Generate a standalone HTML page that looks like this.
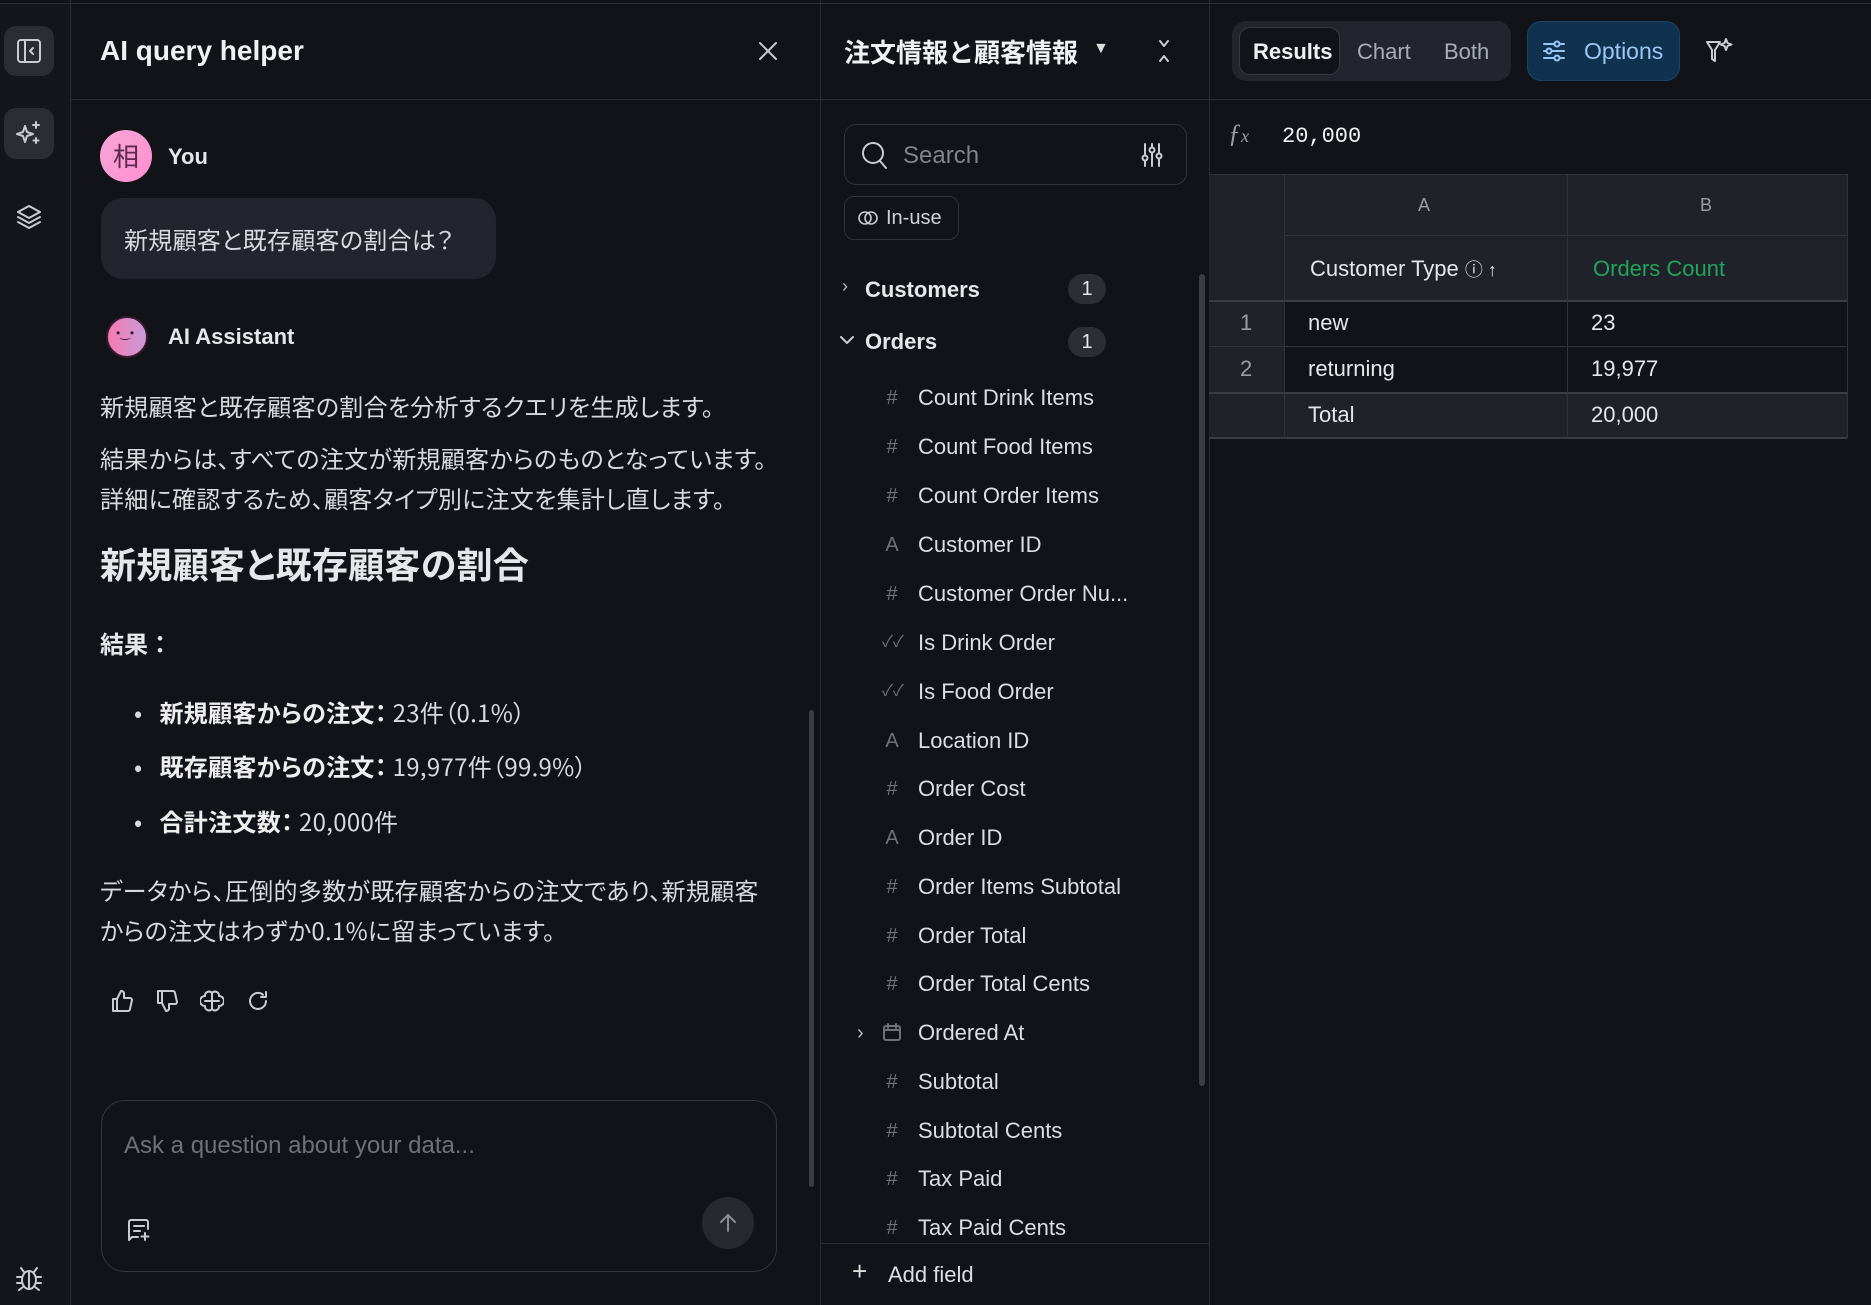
<!DOCTYPE html>
<html><head><meta charset="utf-8"><style>
*{box-sizing:border-box;margin:0;padding:0}
body{width:1871px;height:1305px;background:#111318;color:#e6e7ea;font-family:"Liberation Sans","Noto Sans CJK JP",sans-serif;position:relative;overflow:hidden}
.a{position:absolute}
.jp{font-family:"Noto Sans CJK JP","Liberation Sans",sans-serif}
.p{font-feature-settings:"palt";letter-spacing:0.3px}
.vl{position:absolute;top:0;bottom:0;width:1px;background:#2a2d34}
.hl{position:absolute;height:1px;background:#2a2d34}
.fi{position:absolute;left:918px;font-size:22px;color:#dcdee3;line-height:30px}
.ic{position:absolute;left:882px;width:20px;text-align:center;color:#6e727b;font-size:20px;line-height:30px}
svg{position:absolute;fill:none;stroke:#c9ccd2;stroke-width:2;stroke-linecap:round;stroke-linejoin:round}
.cell{position:absolute;font-size:22px;line-height:30px}
</style></head><body>
<div class="hl" style="left:0;right:0;top:3px;background:#2c2f36"></div>
<!-- sidebar -->
<div class="a" style="left:0;top:4px;width:70px;bottom:0;background:#14161b"></div>
<div class="vl" style="left:70px"></div>
<div class="a" style="left:4px;top:26px;width:50px;height:50px;border-radius:12px;background:#2a2d33"></div>
<svg style="left:16px;top:38px" width="26" height="26" viewBox="0 0 26 26"><rect x="2" y="2" width="22" height="22" rx="3"/><path d="M9 2v22M17 10l-3 3 3 3"/></svg>
<div class="a" style="left:4px;top:108px;width:50px;height:51px;border-radius:12px;background:#2a2d33"></div>
<svg style="left:13px;top:118px" width="32" height="32" viewBox="0 0 32 32"><path d="M12 8l2 6 6 2-6 2-2 6-2-6-6-2 6-2z"/><path d="M23 4v6M20 7h6M23 20v5M20.5 22.5h5"/></svg>
<svg style="left:14px;top:202px" width="30" height="30" viewBox="0 0 30 30"><path d="M15 4l11 6-11 6-11-6z"/><path d="M4 15l11 6 11-6M4 20l11 6 11-6"/></svg>
<svg style="left:14px;top:1263px" width="30" height="30" viewBox="0 0 30 30"><ellipse cx="15" cy="17" rx="7" ry="9"/><path d="M15 9v17M8 14H3M8 20H3M22 14h5M22 20h5M10 9l-3-4M20 9l3-4M9 24l-4 3M21 24l4 3"/></svg>

<!-- AI panel -->
<div class="a" style="left:100px;top:35px;font-size:28px;font-weight:bold;color:#f0f1f3">AI query helper</div>
<svg style="left:757px;top:40px" width="22" height="22" viewBox="0 0 22 22"><path d="M3 3l16 16M19 3L3 19"/></svg>
<div class="hl" style="left:70px;width:750px;top:99px"></div>
<div class="vl" style="left:820px"></div>
<div class="a" style="left:809px;top:710px;width:5px;height:477px;background:#3a3d44;border-radius:3px"></div>
<div class="a jp" style="left:100px;top:130px;width:52px;height:52px;border-radius:50%;background:linear-gradient(135deg,#f7a6d8,#ff8fd0);color:#5b2a4c;font-size:26px;text-align:center;line-height:52px">相</div>
<div class="a" style="left:168px;top:144px;font-size:22px;font-weight:bold">You</div>
<div class="a jp p" style="left:101px;top:198px;width:395px;height:81px;border-radius:22px;background:#22252d;font-size:24px;line-height:81px;padding-left:23px;color:#d8dade">新規顧客と既存顧客の割合は？</div>
<div class="a" style="left:106px;top:316px;width:42px;height:42px;border-radius:50%;background:linear-gradient(90deg,#f77ab0,#c89bd8);border:2px solid #3a1a30"></div>
<div class="a" style="left:116px;top:326px;font-size:12px;color:#3a1a30">•‿•</div>
<div class="a" style="left:168px;top:324px;font-size:22px;font-weight:bold">AI Assistant</div>
<div class="a jp p" style="left:100px;top:386px;font-size:24px;line-height:40px;color:#d8dade">新規顧客と既存顧客の割合を分析するクエリを生成します。</div>
<div class="a jp p" style="left:100px;top:438px;font-size:24px;line-height:40px;color:#d8dade">結果からは、すべての注文が新規顧客からのものとなっています。<br>詳細に確認するため、顧客タイプ別に注文を集計し直します。</div>
<div class="a jp p" style="left:100px;top:538px;font-size:36px;font-weight:bold;line-height:50px;color:#e6e7ea">新規顧客と既存顧客の割合</div>
<div class="a jp" style="left:100px;top:626px;font-size:24px;font-weight:bold;line-height:34px">結果：</div>
<div class="a jp p" style="left:134px;top:695px;font-size:24px;line-height:34px;color:#d8dade">•&nbsp;&nbsp;&nbsp;<b style="color:#eee">新規顧客からの注文：</b> 23件（0.1%）</div>
<div class="a jp p" style="left:134px;top:749px;font-size:24px;line-height:34px;color:#d8dade">•&nbsp;&nbsp;&nbsp;<b style="color:#eee">既存顧客からの注文：</b> 19,977件（99.9%）</div>
<div class="a jp p" style="left:134px;top:804px;font-size:24px;line-height:34px;color:#d8dade">•&nbsp;&nbsp;&nbsp;<b style="color:#eee">合計注文数：</b> 20,000件</div>
<div class="a jp p" style="left:100px;top:870px;font-size:24px;line-height:40px;color:#d8dade">データから、圧倒的多数が既存顧客からの注文であり、新規顧客<br>からの注文はわずか0.1%に留まっています。</div>
<svg style="left:110px;top:989px" width="24" height="24" viewBox="0 0 24 24"><path d="M7 10v12H3V10zM7 10l4-8c2 0 3 1 3 3v4h6c1 0 2 1 2 2l-2 9c0 1-1 2-2 2H7"/></svg>
<svg style="left:155px;top:989px" width="24" height="24" viewBox="0 0 24 24"><path d="M7 14V2H3v12zM7 14l4 8c2 0 3-1 3-3v-4h6c1 0 2-1 2-2l-2-9c0-1-1-2-2-2H7"/></svg>
<svg style="left:200px;top:989px" width="24" height="24" viewBox="0 0 24 24"><path d="M12 4a4 4 0 0 0-7 3 4 4 0 0 0 0 10 4 4 0 0 0 7 3 4 4 0 0 0 7-3 4 4 0 0 0 0-10 4 4 0 0 0-7-3zM12 4v16M5 12h14"/></svg>
<svg style="left:246px;top:989px" width="24" height="24" viewBox="0 0 24 24"><path d="M20 12a8 8 0 1 1-3-6.3M20 3v5h-5"/></svg>
<div class="a" style="left:101px;top:1100px;width:676px;height:172px;border:1px solid #33363d;border-radius:24px"></div>
<div class="a" style="left:124px;top:1132px;font-size:24px;color:#6d717a">Ask a question about your data...</div>
<svg style="left:126px;top:1217px" width="26" height="26" viewBox="0 0 26 26"><path d="M12 20H6l-3 3V5a2 2 0 0 1 2-2h15a2 2 0 0 1 2 2v7M8 9h10M8 14h6M19 16v7M15.5 19.5h7"/></svg>
<div class="a" style="left:702px;top:1197px;width:52px;height:52px;border-radius:50%;background:#262930"></div>
<svg style="left:716px;top:1211px" width="24" height="24" viewBox="0 0 24 24"><path d="M12 20V4M5 11l7-7 7 7" stroke="#8a8e96"/></svg>

<!-- middle panel -->
<div class="a jp" style="left:844px;top:33px;font-size:26px;font-weight:bold;color:#f0f1f3">注文情報と顧客情報</div>
<div class="a" style="left:1093px;top:40px;font-size:16px;color:#ddd">▼</div>
<svg style="left:1156px;top:38px" width="16" height="26" viewBox="0 0 16 26"><path d="M4 3l4 5 4-5M4 23l4-5 4 5"/></svg>
<div class="hl" style="left:820px;width:389px;top:99px"></div>
<div class="vl" style="left:1209px"></div>
<div class="a" style="left:844px;top:124px;width:343px;height:61px;border:1px solid #2f323a;border-radius:12px"></div>
<svg style="left:860px;top:140px" width="28" height="30" viewBox="0 0 28 30"><circle cx="13" cy="13" r="10"/><path d="M20 21l6 7"/></svg>
<div class="a" style="left:903px;top:142px;font-size:24px;color:#80848c">Search</div>
<svg style="left:1140px;top:142px" width="24" height="26" viewBox="0 0 24 26"><path d="M5 2v22M12 2v22M19 2v22"/><circle cx="5" cy="16" r="2.5" fill="#111318"/><circle cx="12" cy="8" r="2.5" fill="#111318"/><circle cx="19" cy="14" r="2.5" fill="#111318"/></svg>
<div class="a" style="left:844px;top:196px;width:115px;height:44px;border:1px solid #2f323a;border-radius:10px"></div>
<svg style="left:857px;top:209px" width="24" height="18" viewBox="0 0 24 18" ><circle cx="8" cy="9" r="6" stroke-width="1.6"/><circle cx="14" cy="9" r="6" stroke-width="1.6"/></svg>
<div class="a" style="left:886px;top:207px;font-size:20px;color:#d0d2d6">In-use</div>
<div class="a" style="left:842px;top:276px;font-size:18px;color:#bbb">›</div>
<div class="a" style="left:865px;top:277px;font-size:22px;font-weight:bold">Customers</div>
<div class="a" style="left:1068px;top:274px;width:38px;height:30px;border-radius:15px;background:#2b2e35;text-align:center;line-height:30px;font-size:20px">1</div>
<svg style="left:838px;top:333px" width="18" height="14" viewBox="0 0 18 14"><path d="M3 4l6 6 6-6"/></svg>
<div class="a" style="left:865px;top:329px;font-size:22px;font-weight:bold">Orders</div>
<div class="a" style="left:1068px;top:327px;width:38px;height:30px;border-radius:15px;background:#2b2e35;text-align:center;line-height:30px;font-size:20px">1</div>

<div class="ic" style="top:383px">#</div><div class="fi" style="top:383px">Count Drink Items</div>
<div class="ic" style="top:432px">#</div><div class="fi" style="top:432px">Count Food Items</div>
<div class="ic" style="top:481px">#</div><div class="fi" style="top:481px">Count Order Items</div>
<div class="ic" style="top:530px">A</div><div class="fi" style="top:530px">Customer ID</div>
<div class="ic" style="top:579px">#</div><div class="fi" style="top:579px">Customer Order Nu...</div>
<div class="ic" style="top:628px;font-size:16px">✓✓</div><div class="fi" style="top:628px">Is Drink Order</div>
<div class="ic" style="top:677px;font-size:16px">✓✓</div><div class="fi" style="top:677px">Is Food Order</div>
<div class="ic" style="top:726px">A</div><div class="fi" style="top:726px">Location ID</div>
<div class="ic" style="top:774px">#</div><div class="fi" style="top:774px">Order Cost</div>
<div class="ic" style="top:823px">A</div><div class="fi" style="top:823px">Order ID</div>
<div class="ic" style="top:872px">#</div><div class="fi" style="top:872px">Order Items Subtotal</div>
<div class="ic" style="top:921px">#</div><div class="fi" style="top:921px">Order Total</div>
<div class="ic" style="top:969px">#</div><div class="fi" style="top:969px">Order Total Cents</div>
<div class="a" style="left:857px;top:1018px;font-size:20px;color:#bbb;line-height:30px">›</div>
<svg style="left:882px;top:1022px" width="20" height="20" viewBox="0 0 20 20"><rect x="2" y="4" width="16" height="14" rx="2" stroke="#6e727b"/><path d="M2 8h16M6 2v4M14 2v4" stroke="#6e727b"/></svg>
<div class="fi" style="top:1018px">Ordered At</div>
<div class="ic" style="top:1067px">#</div><div class="fi" style="top:1067px">Subtotal</div>
<div class="ic" style="top:1116px">#</div><div class="fi" style="top:1116px">Subtotal Cents</div>
<div class="ic" style="top:1164px">#</div><div class="fi" style="top:1164px">Tax Paid</div>
<div class="ic" style="top:1213px">#</div><div class="fi" style="top:1213px">Tax Paid Cents</div>
<div class="a" style="left:1199px;top:274px;width:6px;height:812px;background:#3a3d44;border-radius:3px"></div>
<div class="hl" style="left:820px;width:389px;top:1243px"></div>
<div class="a" style="left:852px;top:1256px;font-size:26px;color:#ddd">+</div>
<div class="a" style="left:888px;top:1262px;font-size:22px;color:#dcdee3">Add field</div>

<!-- right panel -->
<div class="a" style="left:1232px;top:21px;width:279px;height:60px;border-radius:14px;background:#22252d"></div>
<div class="a" style="left:1239px;top:27px;width:101px;height:48px;border-radius:11px;background:#111318;border:1px solid #363940"></div>
<div class="a" style="left:1253px;top:39px;font-size:22px;font-weight:bold;color:#f0f1f3">Results</div>
<div class="a" style="left:1357px;top:39px;font-size:22px;color:#a9adb4">Chart</div>
<div class="a" style="left:1444px;top:39px;font-size:22px;color:#a9adb4">Both</div>
<div class="a" style="left:1527px;top:21px;width:153px;height:60px;border-radius:14px;background:#10324f;border:1px solid #1d4466"></div>
<svg style="left:1542px;top:39px" width="24" height="24" viewBox="0 0 24 24"><path d="M2 5h20M2 12h20M2 19h20" stroke="#9cc6f5"/><circle cx="15" cy="5" r="2.5" fill="#10324f" stroke="#9cc6f5"/><circle cx="7" cy="12" r="2.5" fill="#10324f" stroke="#9cc6f5"/><circle cx="15" cy="19" r="2.5" fill="#10324f" stroke="#9cc6f5"/></svg>
<div class="a" style="left:1584px;top:38px;font-size:23px;color:#9cc6f5">Options</div>
<svg style="left:1704px;top:36px" width="30" height="30" viewBox="0 0 30 30"><path d="M3 6h13l-5 8v11l-3-2v-9z"/><path d="M22 3l1.5 4 4 1.5-4 1.5-1.5 4-1.5-4-4-1.5 4-1.5z"/></svg>
<div class="hl" style="left:1209px;right:0;top:99px"></div>
<div class="a" style="left:1228px;top:119px;font-size:26px;font-style:italic;font-family:'Liberation Serif',serif;color:#9a9ea6">ƒ<span style="font-size:18px">x</span></div>
<div class="a" style="left:1282px;top:124px;font-size:22px;font-family:'Liberation Mono',monospace;color:#f0f1f3">20,000</div>

<div class="a" style="left:1209px;top:174px;width:638px;height:126px;background:#1f2229"></div>
<div class="a" style="left:1209px;top:300px;width:75px;height:92px;background:#1f2229"></div>
<div class="a" style="left:1209px;top:392px;width:638px;height:45px;background:#1f2229"></div>
<div class="hl" style="left:1209px;width:638px;top:174px;background:#30333a"></div>
<div class="hl" style="left:1284px;width:563px;top:235px;background:#30333a"></div>
<div class="hl" style="left:1209px;width:638px;top:300px;background:#3a3d44;height:2px"></div>
<div class="hl" style="left:1209px;width:638px;top:346px;background:#30333a"></div>
<div class="hl" style="left:1209px;width:638px;top:392px;background:#3a3d44;height:2px"></div>
<div class="hl" style="left:1209px;width:638px;top:437px;background:#3a3d44;height:2px"></div>
<div class="a" style="left:1284px;top:174px;width:1px;height:264px;background:#30333a"></div>
<div class="a" style="left:1567px;top:174px;width:1px;height:264px;background:#30333a"></div>
<div class="a" style="left:1847px;top:174px;width:1px;height:264px;background:#30333a"></div>
<div class="cell" style="left:1418px;top:190px;font-size:18px;color:#9a9ea6">A</div>
<div class="cell" style="left:1700px;top:190px;font-size:18px;color:#9a9ea6">B</div>
<div class="cell" style="left:1310px;top:254px">Customer Type <span style="font-size:18px">ⓘ ↑</span></div>
<div class="cell" style="left:1593px;top:254px;color:#22a35d">Orders Count</div>
<div class="cell" style="left:1240px;top:308px;color:#9a9ea6">1</div>
<div class="cell" style="left:1308px;top:308px">new</div>
<div class="cell" style="left:1591px;top:308px">23</div>
<div class="cell" style="left:1240px;top:354px;color:#9a9ea6">2</div>
<div class="cell" style="left:1308px;top:354px">returning</div>
<div class="cell" style="left:1591px;top:354px">19,977</div>
<div class="cell" style="left:1308px;top:400px">Total</div>
<div class="cell" style="left:1591px;top:400px">20,000</div>
</body></html>
